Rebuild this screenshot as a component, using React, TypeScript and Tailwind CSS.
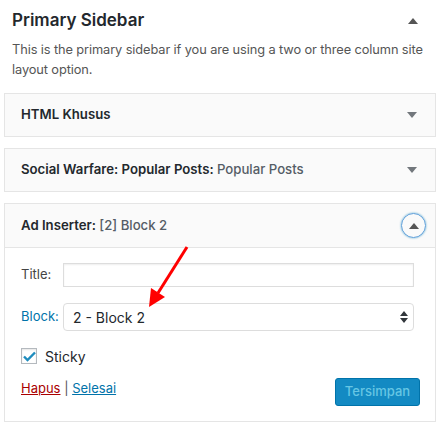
import React from "react";

const font = { fontFamily: "Inter, 'Liberation Sans', sans-serif" };

const Caret = ({ up }: { up?: boolean }) => (
  <svg width="10" height="6" viewBox="0 0 10 6" className="block">
    {up ? <path d="M0 6 L5 0 L10 6 Z" fill="#555" /> : <path d="M0 0 L5 6 L10 0 Z" fill="#72777c" />}
  </svg>
);

const Widget = ({ children }: { children: React.ReactNode }) => (
  <div className="mx-[4px] flex h-[44px] items-center justify-between border border-[#e5e5e5] bg-[#fafafa] pl-[16px] pr-[18px] text-[13.2px] font-semibold text-[#23282d]">
    <span>{children}</span>
    <Caret />
  </div>
);

export default function App() {
  return (
    <div className="relative h-[428px] w-[440px] overflow-hidden bg-white" style={font}>
      <div className="flex h-[40px] items-center justify-between pl-[12px] pr-[22px] pt-[2px]">
        <h2 className="text-[17px] font-semibold text-[#23282d]">Primary Sidebar</h2>
        <Caret up />
      </div>
      <p className="px-[12px] text-[12.8px] leading-[20px] tracking-[-0.1px] text-[#555]">
        This is the primary sidebar if you are using a two or three column site layout option.
      </p>
      <div className="mt-[13px] flex flex-col gap-[11px]">
        <Widget>HTML Khusus</Widget>
        <Widget>
          Social Warfare: Popular Posts: <span className="font-medium text-[#555d66]">Popular Posts</span>
        </Widget>
        <div className="mx-[4px] border border-[#e5e5e5]">
          <div className="flex h-[44px] items-center justify-between border-b border-[#e5e5e5] bg-[#fafafa] pl-[16px] pr-[9px] text-[13.2px] font-semibold text-[#23282d]">
            <span>
              Ad Inserter: <span className="font-medium text-[#555d66]">[2] Block 2</span>
            </span>
            <div className="flex h-[25px] w-[25px] items-center justify-center rounded-full border border-[#5b9dd9] shadow-[0_0_2px_rgba(30,140,190,0.8)]">
              <Caret up />
            </div>
          </div>
          <div className="px-[16px] pb-[15px] pt-[15px] text-[13px] text-[#444]">
            <div className="flex h-[24px] items-center">
              <span className="w-[42px]">Title:</span>
              <div className="h-[24px] flex-1 border border-[#ddd] shadow-[inset_0_1px_2px_rgba(0,0,0,0.07)]" />
              <span className="w-[5px]" />
            </div>
            <div className="mt-[16px] flex h-[28px] items-center">
              <span className="w-[42px] text-[#0073aa]">Block:</span>
              <div className="flex h-[28px] flex-1 items-center justify-between rounded-[4px] border border-[#ddd] pl-[9px] pr-[5px] text-[14px] text-[#23282d]">
                <span>2 - Block 2</span>
                <svg width="8" height="12" viewBox="0 0 8 12">
                  <path d="M0 5 L4 0 L8 5 Z M0 7 L4 12 L8 7 Z" fill="#32373c" />
                </svg>
              </div>
              <span className="w-[5px]" />
            </div>
            <div className="mt-[15px] flex h-[20px] items-center gap-[8px]">
              <div className="flex h-[16px] w-[16px] items-center justify-center border border-[#b4b9be] shadow-[inset_0_1px_2px_rgba(0,0,0,0.1)]">
                <svg width="13" height="11" viewBox="0 0 13 11">
                  <path d="M1 5.5 L4.5 9 L12 1.5" stroke="#1e8cbe" strokeWidth="2.4" fill="none" />
                </svg>
              </div>
              <span className="text-[14px] text-[#23282d]">Sticky</span>
            </div>
            <div className="mt-[12px] flex h-[28px] items-start justify-between">
              <div className="text-[13px] leading-[20px]">
                <a className="text-[#a00] underline">Hapus</a>
                <span className="text-[#555]"> | </span>
                <a className="text-[#0073aa] underline">Selesai</a>
              </div>
              <button className="mr-[-1px] h-[28px] w-[85px] rounded-[3px] border border-[#0073aa] bg-[#138ac3] text-[13px] font-medium text-[#66c6e4]">
                Tersimpan
              </button>
            </div>
          </div>
        </div>
      </div>
      <svg className="absolute left-0 top-0" width="440" height="428">
        <line x1="187" y1="247" x2="158" y2="293" stroke="#ff0000" strokeWidth="3" />
        <path d="M149 307 L151 288 L165 297 Z" fill="#ff0000" />
      </svg>
    </div>
  );
}
